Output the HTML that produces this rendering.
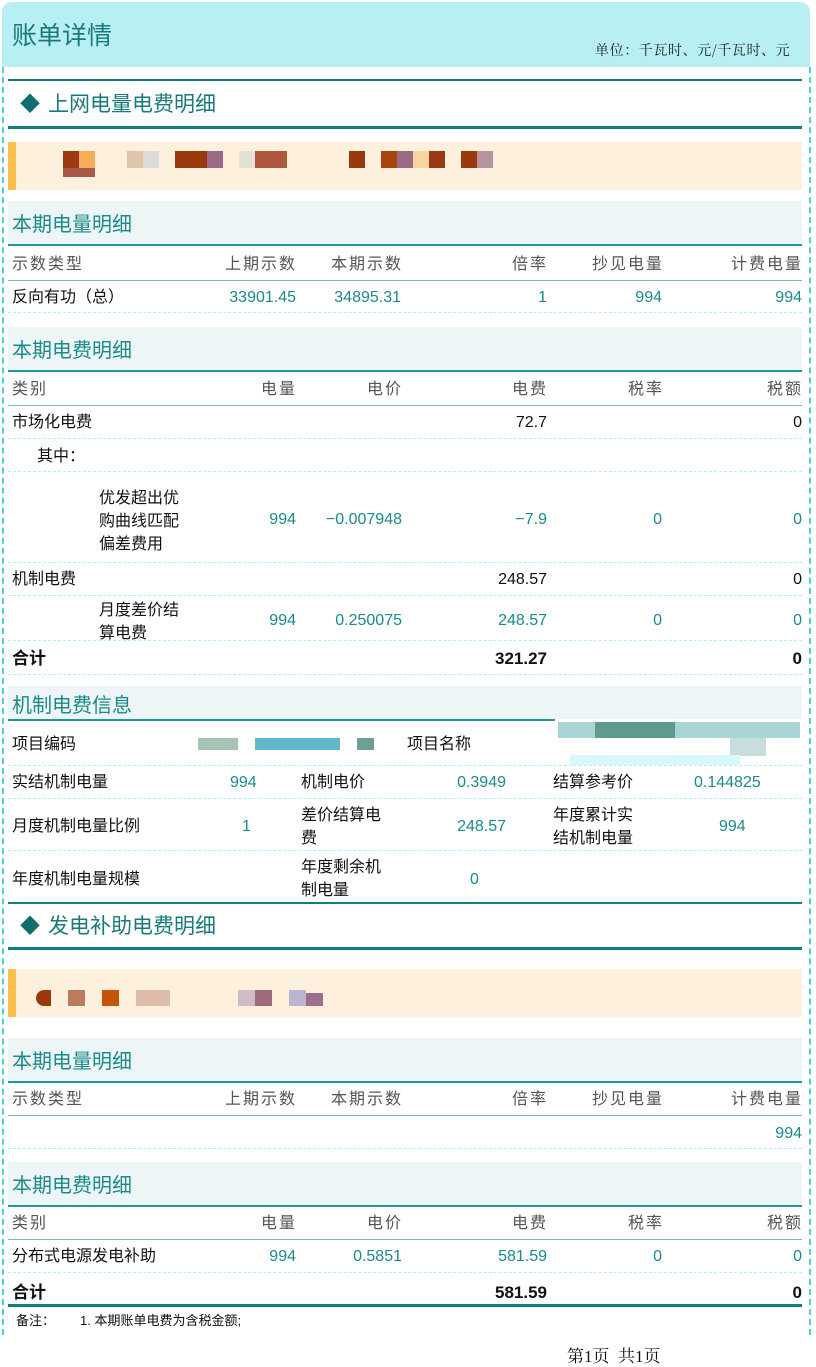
<!DOCTYPE html>
<html><head><meta charset="utf-8">
<style>
*{margin:0;padding:0;box-sizing:border-box}
body{width:816px;height:1361px;background:#fff;position:relative;overflow:hidden;font-family:"Liberation Sans","Noto Sans CJK SC",sans-serif;color:#111}
.a{position:absolute}
.t{position:absolute;white-space:nowrap;line-height:20px;font-size:16px;margin-top:2px}
.r{text-align:right}
.g{color:#1a8a8a}
.h{color:#555;letter-spacing:2px;font-size:16px}
.b{font-weight:bold}
.sub{position:absolute;left:8px;width:794px;height:45px;background:#edf5f7;border-bottom:2px solid #1f9a9a}
.sub span{position:absolute;left:4px;top:12px;font-size:20px;color:#1a8a8a;line-height:24px}
.ln{position:absolute;left:8px;width:794px;height:1px;background:#7fb8b8}
.dl{position:absolute;left:8px;width:794px;border-top:1px dashed #b8eef0}
.tl{position:absolute;left:8px;width:794px;background:#127f7f}
.px{position:absolute}
</style></head><body>
<div class="a" style="left:2px;top:2px;width:808px;height:65px;background:#b8eff2;border-radius:10px 10px 0 0"></div>
<div class="t" style="left:12px;top:20px;font-size:25px;line-height:28px;color:#1a7a7a">账单详情</div>
<div class="t" style="left:595px;top:38px;font-size:14px;letter-spacing:0.6px;color:#222;font-family:'Noto Serif CJK SC',serif">单位：千瓦时、元/千瓦时、元</div>
<div class="a" style="left:2px;top:67px;height:1268px;border-left:2px dashed #4fd0d5"></div>
<div class="a" style="left:809px;top:67px;height:1268px;border-left:2px dashed #4fd0d5"></div>

<div class="tl" style="top:79px;height:2px"></div>
<div class="t" style="left:20px;top:91px;font-size:20px;line-height:24px;color:#106e6e">◆</div>
<div class="t" style="left:48px;top:91px;font-size:21px;line-height:24px;color:#1a7a7a">上网电量电费明细</div>
<div class="tl" style="top:126px;height:3px"></div>
<div class="a" style="left:8px;top:142px;width:794px;height:48px;background:#fdf0dc"></div>
<div class="a" style="left:8px;top:142px;width:8px;height:48px;background:#fbbf4e"></div>
<div class="px" style="left:63px;top:151px;width:16px;height:17px;background:#9c3a14"></div>
<div class="px" style="left:79px;top:151px;width:16px;height:17px;background:#f6ae5a"></div>
<div class="px" style="left:63px;top:168px;width:32px;height:9px;background:#a85a48"></div>
<div class="px" style="left:127px;top:151px;width:16px;height:17px;background:#e0c4a8"></div>
<div class="px" style="left:143px;top:151px;width:16px;height:17px;background:#dcdcd8"></div>
<div class="px" style="left:175px;top:151px;width:32px;height:17px;background:#9a3a0c"></div>
<div class="px" style="left:207px;top:151px;width:16px;height:17px;background:#9a6a88"></div>
<div class="px" style="left:239px;top:151px;width:16px;height:17px;background:#e4e0d6"></div>
<div class="px" style="left:255px;top:151px;width:32px;height:17px;background:#b0583c"></div>
<div class="px" style="left:349px;top:151px;width:16px;height:17px;background:#9a3a0c"></div>
<div class="px" style="left:381px;top:151px;width:16px;height:17px;background:#a8440c"></div>
<div class="px" style="left:397px;top:151px;width:16px;height:17px;background:#9a6a88"></div>
<div class="px" style="left:413px;top:151px;width:16px;height:17px;background:#f8d49e"></div>
<div class="px" style="left:429px;top:151px;width:16px;height:17px;background:#9a3a14"></div>
<div class="px" style="left:461px;top:151px;width:16px;height:17px;background:#9a3a0c"></div>
<div class="px" style="left:477px;top:151px;width:16px;height:17px;background:#b894a0"></div>

<div class="sub" style="top:201px"><span>本期电量明细</span></div>
<div class="t h" style="left:12px;top:253px">示数类型</div>
<div class="t h r" style="right:519px;top:253px">上期示数</div>
<div class="t h r" style="right:413px;top:253px">本期示数</div>
<div class="t h r" style="right:268px;top:253px">倍率</div>
<div class="t h r" style="right:152px;top:253px">抄见电量</div>
<div class="t h r" style="right:13px;top:253px">计费电量</div>
<div class="ln" style="top:280px"></div>
<div class="t" style="left:12px;top:286px">反向有功（总）</div>
<div class="t g r" style="right:520px;top:286px">33901.45</div>
<div class="t g r" style="right:415px;top:286px">34895.31</div>
<div class="t g r" style="right:269px;top:286px">1</div>
<div class="t g r" style="right:154px;top:286px">994</div>
<div class="t g r" style="right:14px;top:286px">994</div>
<div class="dl" style="top:312px"></div>

<div class="sub" style="top:327px"><span>本期电费明细</span></div>
<div class="t h" style="left:12px;top:378px">类别</div>
<div class="t h r" style="right:519px;top:378px">电量</div>
<div class="t h r" style="right:413px;top:378px">电价</div>
<div class="t h r" style="right:268px;top:378px">电费</div>
<div class="t h r" style="right:152px;top:378px">税率</div>
<div class="t h r" style="right:13px;top:378px">税额</div>
<div class="ln" style="top:405px"></div>
<div class="t" style="left:12px;top:411px">市场化电费</div>
<div class="t r" style="right:269px;top:411px">72.7</div>
<div class="t r" style="right:14px;top:411px">0</div>
<div class="dl" style="top:438px"></div>
<div class="t" style="left:37px;top:445px">其中：</div>
<div class="dl" style="top:471px"></div>
<div class="t" style="left:99px;top:485px;line-height:23px">优发超出优<br>购曲线匹配<br>偏差费用</div>
<div class="t g r" style="right:520px;top:508px">994</div>
<div class="t g r" style="right:414px;top:508px">−0.007948</div>
<div class="t g r" style="right:269px;top:508px">−7.9</div>
<div class="t g r" style="right:154px;top:508px">0</div>
<div class="t g r" style="right:14px;top:508px">0</div>
<div class="dl" style="top:562px"></div>
<div class="t" style="left:12px;top:568px">机制电费</div>
<div class="t r" style="right:269px;top:568px">248.57</div>
<div class="t r" style="right:14px;top:568px">0</div>
<div class="dl" style="top:595px"></div>
<div class="t" style="left:99px;top:597px;line-height:23px">月度差价结<br>算电费</div>
<div class="t g r" style="right:520px;top:609px">994</div>
<div class="t g r" style="right:414px;top:609px">0.250075</div>
<div class="t g r" style="right:269px;top:609px">248.57</div>
<div class="t g r" style="right:154px;top:609px">0</div>
<div class="t g r" style="right:14px;top:609px">0</div>
<div class="dl" style="top:640px"></div>
<div class="t b" style="left:12px;top:647px;font-size:17px">合计</div>
<div class="t b r" style="right:269px;top:647px;font-size:17px">321.27</div>
<div class="t b r" style="right:14px;top:647px;font-size:17px">0</div>
<div class="dl" style="top:674px"></div>

<div class="a" style="left:8px;top:686px;width:794px;height:33px;background:#edf5f7"></div>
<div class="a" style="left:8px;top:719px;width:547px;height:2px;background:#1f9a9a"></div>
<div class="t" style="left:12px;top:692px;font-size:20px;line-height:24px;color:#1a8a8a">机制电费信息</div>
<div class="t" style="left:12px;top:733px">项目编码</div>
<div class="px" style="left:198px;top:738px;width:40px;height:12px;background:#a8c4b4"></div>
<div class="px" style="left:255px;top:738px;width:85px;height:12px;background:#5fb8c8"></div>
<div class="px" style="left:357px;top:738px;width:17px;height:12px;background:#6f9f94"></div>
<div class="t" style="left:407px;top:733px">项目名称</div>
<div class="px" style="left:558px;top:722px;width:242px;height:16px;background:#a8d4d4"></div>
<div class="px" style="left:595px;top:722px;width:80px;height:16px;background:#5f9a90"></div>
<div class="px" style="left:730px;top:738px;width:36px;height:18px;background:#c8dede"></div>
<div class="px" style="left:570px;top:755px;width:170px;height:10px;background:#d8f8fa"></div>
<div class="dl" style="top:765px"></div>
<div class="t" style="left:12px;top:771px">实结机制电量</div>
<div class="t g" style="left:230px;top:771px">994</div>
<div class="t" style="left:301px;top:771px">机制电价</div>
<div class="t g r" style="right:310px;top:771px">0.3949</div>
<div class="t" style="left:553px;top:771px">结算参考价</div>
<div class="t g" style="left:694px;top:771px">0.144825</div>
<div class="dl" style="top:798px"></div>
<div class="t" style="left:12px;top:815px">月度机制电量比例</div>
<div class="t g" style="left:242px;top:815px">1</div>
<div class="t" style="left:301px;top:802px;line-height:23px">差价结算电<br>费</div>
<div class="t g r" style="right:310px;top:815px">248.57</div>
<div class="t" style="left:553px;top:802px;line-height:23px">年度累计实<br>结机制电量</div>
<div class="t g" style="left:719px;top:815px">994</div>
<div class="dl" style="top:850px"></div>
<div class="t" style="left:12px;top:868px">年度机制电量规模</div>
<div class="t" style="left:301px;top:854px;line-height:23px">年度剩余机<br>制电量</div>
<div class="t g" style="left:470px;top:868px">0</div>
<div class="tl" style="top:902px;height:2px"></div>

<div class="t" style="left:20px;top:913px;font-size:20px;line-height:24px;color:#106e6e">◆</div>
<div class="t" style="left:48px;top:913px;font-size:21px;line-height:24px;color:#1a7a7a">发电补助电费明细</div>
<div class="tl" style="top:947px;height:3px"></div>
<div class="a" style="left:8px;top:969px;width:794px;height:48px;background:#fdf0dc"></div>
<div class="a" style="left:8px;top:969px;width:8px;height:48px;background:#fbbf4e"></div>
<div class="px" style="left:36px;top:990px;width:15px;height:16px;background:#9a3a0c;border-radius:8px 0 0 8px"></div>
<div class="px" style="left:68px;top:990px;width:17px;height:16px;background:#bc7a5e"></div>
<div class="px" style="left:102px;top:990px;width:17px;height:16px;background:#c45408"></div>
<div class="px" style="left:136px;top:990px;width:34px;height:16px;background:#dcbcaa"></div>
<div class="px" style="left:238px;top:990px;width:17px;height:16px;background:#d0bcc8"></div>
<div class="px" style="left:255px;top:990px;width:17px;height:16px;background:#a06a7c"></div>
<div class="px" style="left:289px;top:990px;width:17px;height:16px;background:#bcb4d0"></div>
<div class="px" style="left:306px;top:993px;width:17px;height:13px;background:#9e6e8c"></div>

<div class="sub" style="top:1038px"><span>本期电量明细</span></div>
<div class="t h" style="left:12px;top:1088px">示数类型</div>
<div class="t h r" style="right:519px;top:1088px">上期示数</div>
<div class="t h r" style="right:413px;top:1088px">本期示数</div>
<div class="t h r" style="right:268px;top:1088px">倍率</div>
<div class="t h r" style="right:152px;top:1088px">抄见电量</div>
<div class="t h r" style="right:13px;top:1088px">计费电量</div>
<div class="ln" style="top:1115px"></div>
<div class="t g r" style="right:14px;top:1122px">994</div>
<div class="dl" style="top:1148px"></div>

<div class="sub" style="top:1162px"><span>本期电费明细</span></div>
<div class="t h" style="left:12px;top:1212px">类别</div>
<div class="t h r" style="right:519px;top:1212px">电量</div>
<div class="t h r" style="right:413px;top:1212px">电价</div>
<div class="t h r" style="right:268px;top:1212px">电费</div>
<div class="t h r" style="right:152px;top:1212px">税率</div>
<div class="t h r" style="right:13px;top:1212px">税额</div>
<div class="ln" style="top:1239px"></div>
<div class="t" style="left:12px;top:1245px">分布式电源发电补助</div>
<div class="t g r" style="right:520px;top:1245px">994</div>
<div class="t g r" style="right:414px;top:1245px">0.5851</div>
<div class="t g r" style="right:269px;top:1245px">581.59</div>
<div class="t g r" style="right:154px;top:1245px">0</div>
<div class="t g r" style="right:14px;top:1245px">0</div>
<div class="dl" style="top:1272px"></div>
<div class="t b" style="left:12px;top:1281px;font-size:17px">合计</div>
<div class="t b r" style="right:269px;top:1281px;font-size:17px">581.59</div>
<div class="t b r" style="right:14px;top:1281px;font-size:17px">0</div>
<div class="tl" style="top:1304px;height:3px"></div>
<div class="t" style="left:16px;top:1309px;font-size:13px">备注：</div>
<div class="t" style="left:80px;top:1309px;font-size:13px">1. 本期账单电费为含税金额;</div>
<div class="t" style="left:567px;top:1345px;font-size:17px;font-family:'Liberation Serif','Noto Serif CJK SC',serif">第1页&nbsp; 共1页</div>
</body></html>
